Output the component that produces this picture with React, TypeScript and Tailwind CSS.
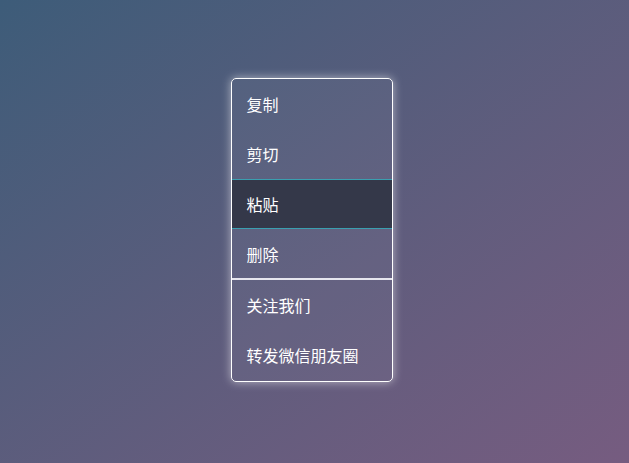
import React from 'react';

const items = [
  { label: '复制' },
  { label: '剪切' },
  { label: '粘贴', active: true },
  { label: '删除', divider: true },
  { label: '关注我们' },
  { label: '转发微信朋友圈' },
];

const App: React.FC = () => {
  return (
    <div
      className="w-[629px] h-[463px] bg-gradient-to-br from-[#3d5c79] to-[#765c80] flex justify-center pt-[78px] pr-[6px]"
      style={{ fontFamily: '"Noto Sans CJK SC", "Noto Sans", sans-serif' }}
    >
      <ul className="w-[162px] h-[304px] self-start border border-white rounded-[5px] shadow-[0_0_10px_rgba(255,255,255,0.55)] overflow-hidden bg-white/[0.03]">
        {items.map((it) => (
          <li
            key={it.label}
            className={`h-[50px] flex items-center pl-[15px] text-[16px] text-white ${
              it.active ? 'bg-[#343849] border-y border-[#3a9fb0]' : ''
            } ${it.divider ? 'border-b-2 border-b-[#e6e6ee] h-[51px]' : ''}`}
          >
            {it.label}
          </li>
        ))}
      </ul>
    </div>
  );
};

export default App;
